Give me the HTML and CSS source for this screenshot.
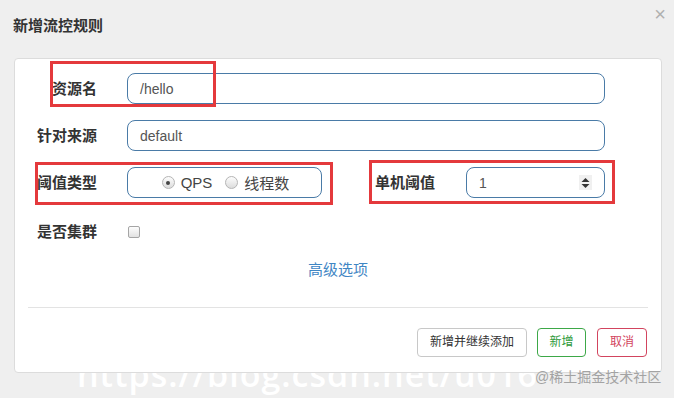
FILE: index.html
```html
<!DOCTYPE html>
<html lang="zh">
<head>
<meta charset="utf-8">
<title>新增流控规则</title>
<link rel="stylesheet" href="styles.css">
</head>
<body>
<div class="dialog">
  <div class="header">
    <h4 class="title">新增流控规则</h4>
    <span class="close">×</span>
  </div>
  <div class="panel">
    <div class="form">
      <div class="row">
        <label class="lbl">资源名</label>
        <div class="input wide">/hello</div>
      </div>
      <div class="row">
        <label class="lbl">针对来源</label>
        <div class="input wide">default</div>
      </div>
      <div class="row">
        <label class="lbl">阈值类型</label>
        <div class="input radios">
          <span class="radio checked"></span><span class="rtext">QPS</span>
          <span class="radio"></span><span class="rtext">线程数</span>
        </div>
        <label class="lbl lbl2">单机阈值</label>
        <div class="input num">
          <span>1</span>
          <span class="spin">
            <svg width="9" height="12" viewBox="0 0 9 12"><path d="M4.5 1 L8.5 5 L0.5 5 Z M4.5 11 L8.5 7 L0.5 7 Z" fill="#333"/></svg>
          </span>
        </div>
      </div>
      <div class="row row4">
        <label class="lbl">是否集群</label>
        <span class="checkbox"></span>
      </div>
      <div class="advanced"><a class="link">高级选项</a></div>
    </div>
    <div class="divider"></div>
    <div class="footer">
      <button class="btn btn-default">新增并继续添加</button>
      <button class="btn btn-green">新增</button>
      <button class="btn btn-red">取消</button>
    </div>
    <div class="mark mark1"></div>
    <div class="mark mark2"></div>
    <div class="mark mark3"></div>
  </div>
</div>
<div class="wm-url">https://blog.csdn.net/u016</div>
<div class="wm-juejin">@稀土掘金技术社区</div>
</body>
</html>
```
FILE: styles.css
```css
html, body {
  margin: 0;
  padding: 0;
}
body {
  width: 674px;
  height: 398px;
  background: #efefef;
  font-family: "Liberation Sans", "Noto Sans CJK SC", sans-serif;
  color: #333;
  position: relative;
  overflow: hidden;
}
.dialog {
  position: relative;
  z-index: 1;
}
.header {
  height: 58px;
  position: relative;
}
.title {
  margin: 0;
  padding: 16px 0 0 13px;
  font-size: 15px;
  line-height: 20px;
  font-weight: bold;
  color: #333;
}
.close {
  position: absolute;
  right: 8px;
  top: 3px;
  font-size: 20px;
  line-height: 22px;
  color: #b0b0b0;
}
.panel {
  position: relative;
  margin-left: 14px;
  width: 648px;
  box-sizing: border-box;
  background: #fff;
  border: 1px solid #dcdcdc;
  border-radius: 4px;
}
.form {
  padding-top: 14px;
}
.row {
  display: flex;
  align-items: center;
  height: 31px;
  padding-left: 20px;
  margin-bottom: 16px;
}
.row4 {
  margin-top: 18px;
  margin-bottom: 0;
}
.lbl {
  width: 62px;
  text-align: right;
  font-size: 15px;
  font-weight: bold;
  color: #333;
  margin-right: 30px;
  white-space: nowrap;
  line-height: 20px;
}
.lbl2 {
  width: 61px;
  margin-left: 52px;
  margin-right: 31px;
}
.input {
  box-sizing: border-box;
  height: 31px;
  border: 1px solid #4a7ba7;
  border-radius: 8px;
  font-size: 14px;
  color: #555;
  padding-left: 12px;
  display: flex;
  align-items: center;
}
.wide {
  width: 478px;
}
.radios {
  width: 195px;
  padding-left: 2px;
  justify-content: center;
  color: #444;
  font-size: 15px;
}
.radio {
  width: 11px;
  height: 11px;
  border-radius: 50%;
  border: 1px solid #b5b5b5;
  background: linear-gradient(#fdfdfd, #dcdcdc);
  display: inline-block;
  position: relative;
  margin-right: 6px;
}
.radio.checked::after {
  content: "";
  position: absolute;
  left: 3.5px;
  top: 3.5px;
  width: 4px;
  height: 4px;
  border-radius: 50%;
  background: #444;
}
.rtext {
  margin-right: 13px;
}
.rtext:last-child {
  margin-right: 0;
}
.num {
  width: 139px;
  justify-content: space-between;
  padding-right: 12px;
}
.spin {
  width: 13px;
  height: 15px;
  background: #f0f0f0;
  display: flex;
  align-items: center;
  justify-content: center;
}
.checkbox {
  width: 10px;
  height: 10px;
  border: 1px solid #a5a5a5;
  border-radius: 2px;
  background: linear-gradient(#fdfdfd, #e2e2e2);
  margin-left: 1px;
}
.advanced {
  text-align: center;
  margin-top: 13px;
  height: 20px;
  line-height: 20px;
}
.link {
  color: #3f86c4;
  font-size: 15px;
}
.divider {
  margin: 27px 13px 0 13px;
  height: 1px;
  background: #e3e3e3;
}
.footer {
  display: flex;
  justify-content: flex-end;
  padding: 20px 14px 15px 0;
  gap: 10px;
}
.btn {
  box-sizing: border-box;
  height: 29px;
  border-radius: 4px;
  background: #fff;
  font-family: "Liberation Sans", "Noto Sans CJK SC", sans-serif;
  font-size: 12px;
  padding: 0;
  line-height: 27px;
}
.btn-default {
  width: 110px;
  border: 1px solid #c8c8c8;
  color: #333;
}
.btn-green {
  width: 49px;
  border: 1px solid #3da848;
  color: #2e9a3a;
}
.btn-red {
  width: 50px;
  margin-left: 1px;
  border: 1px solid #d2445e;
  color: #d2445e;
}
.mark {
  position: absolute;
  box-sizing: border-box;
  border: 3px solid #e4393c;
}
.mark1 {
  left: 35px;
  top: 2px;
  width: 166px;
  height: 46px;
}
.mark2 {
  left: 20px;
  top: 103px;
  width: 298px;
  height: 43px;
}
.mark3 {
  left: 354px;
  top: 101px;
  width: 246px;
  height: 44px;
}
.wm-url {
  position: absolute;
  left: 77px;
  top: 354px;
  font-family: "Open Sans", sans-serif;
  font-weight: 600;
  font-size: 34px;
  line-height: 40px;
  color: #fff;
  letter-spacing: 1px;
  z-index: 0;
  white-space: nowrap;
}
.wm-juejin {
  position: absolute;
  left: 535px;
  top: 368px;
  font-size: 14px;
  line-height: 18px;
  color: #a3a3a3;
  z-index: 2;
  white-space: nowrap;
}
```
